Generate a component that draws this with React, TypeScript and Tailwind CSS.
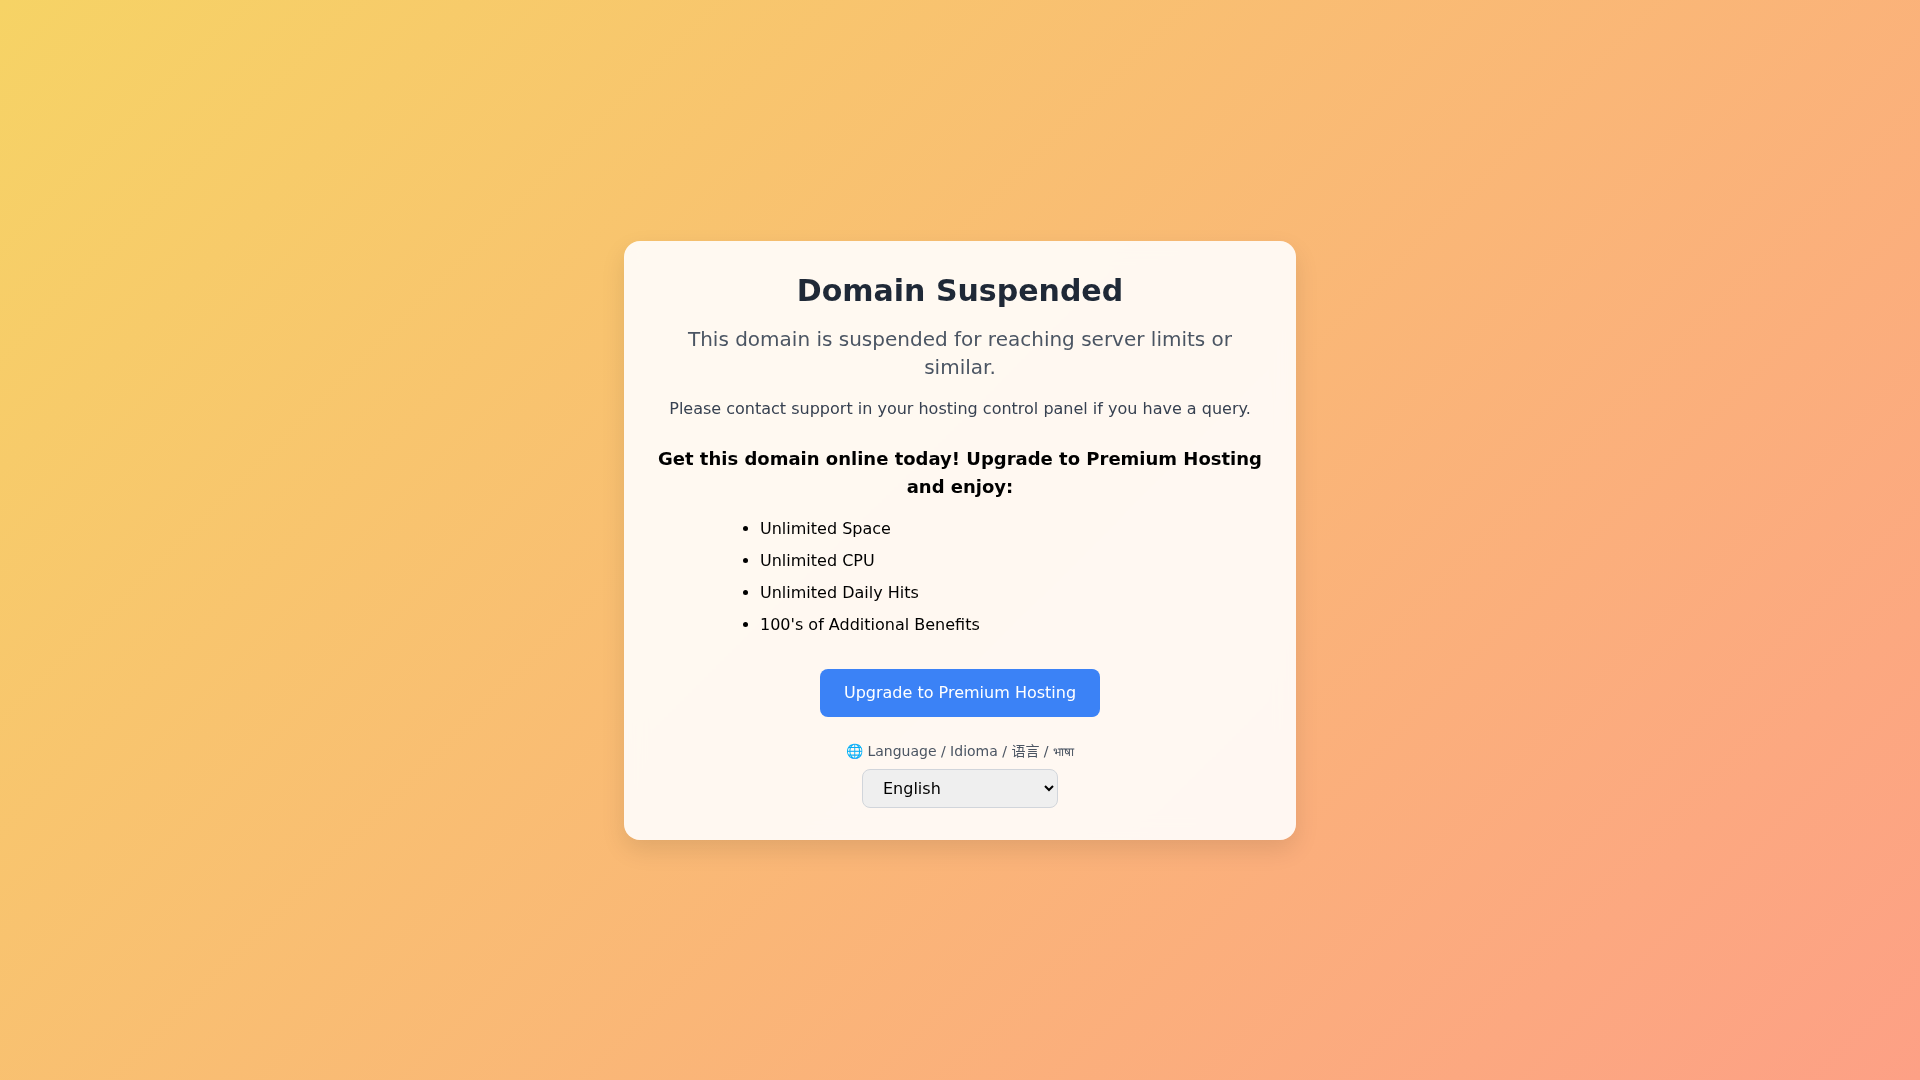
import { useState } from "react";

const BENEFITS = [
  "Unlimited Space",
  "Unlimited CPU",
  "Unlimited Daily Hits",
  "100's of Additional Benefits",
];

const LANGUAGES = [
  { code: "en", label: "English" },
  { code: "es", label: "Español" },
  { code: "zh", label: "中文" },
  { code: "hi", label: "हिन्दी" },
];

export default function App() {
  return (
    <main className="
      min-h-screen flex items-center justify-center
      bg-[linear-gradient(135deg,#f6d365_0%,#fda085_100%)]
      font-['DejaVu_Sans','Noto_Sans_CJK_SC',sans-serif] text-black
    ">
      <div className="
        w-full max-w-2xl p-8 rounded-2xl text-center
        bg-white/90 backdrop-blur-[10px] shadow-[0_10px_25px_rgba(0,0,0,0.1)]
      ">
        <h1 className="text-3xl font-bold text-[#1f2937] mb-4">Domain Suspended</h1>
        <p className="text-xl text-[#4b5563] mb-4">
          This domain is suspended for reaching server limits or similar.
        </p>
        <p className="text-[#374151] mb-6">
          Please contact support in your hosting control panel if you have a query.
        </p>

        <h2 className="text-lg font-semibold mb-4">
          Get this domain online today! Upgrade to Premium Hosting and enjoy:
        </h2>
        <ul className="list-disc max-w-md mx-auto mb-8 pl-6 space-y-2 text-left">
          {BENEFITS.map((benefit) => (
            <li key={benefit}>{benefit}</li>
          ))}
        </ul>

        <button
          type="button"
          className="px-6 py-3 rounded-lg bg-[#3b82f6] text-white hover:bg-[#2563eb] transition"
        >
          Upgrade to Premium Hosting
        </button>

        <LanguagePicker />
      </div>
    </main>
  );
}

function LanguagePicker() {
  const [language, setLanguage] = useState("en");

  return (
    <div className="mt-6 flex flex-col items-center gap-2">
      <label htmlFor="language" className="text-sm text-[#4b5563]">
        🌐 Language / Idioma / <span lang="zh">语言</span> /{" "}
        <span lang="hi" className="text-xs">भाषा</span>
      </label>
      <select
        id="language"
        value={language}
        onChange={(e) => setLanguage(e.target.value)}
        className="w-[196px] px-4 py-2 rounded-lg border border-[#d1d5db] bg-[#efefef]"
      >
        {LANGUAGES.map(({ code, label }) => (
          <option key={code} value={code}>{label}</option>
        ))}
      </select>
    </div>
  );
}
